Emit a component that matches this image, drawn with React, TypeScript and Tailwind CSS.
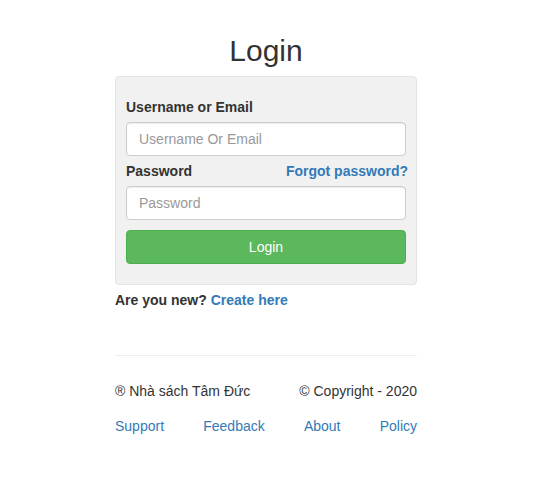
export default function App() {
    return (
        <div className="min-h-[494px] bg-white font-['Liberation_Sans',Arial,sans-serif] text-[14px] text-[#333]">
            <div className="ml-[115px] w-[302px] pt-[31px]">
                {/* Title */}
                <h1 className="text-center text-[30px] leading-[40px] text-[#333]">Login</h1>

                {/* Login panel */}
                <div className="mt-[5px] rounded-[4px] border border-[#e3e3e3] bg-[#f1f1f1] px-[10px] pt-[20px] pb-[20px]">
                    <label className="block font-bold leading-[20px] mb-[5px]">Username or Email</label>
                    <input
                        type="text"
                        placeholder="Username Or Email"
                        className="block h-[34px] w-[280px] rounded-[4px] border border-[#ccc] bg-white px-[12px] text-[14px] text-[#555] placeholder:text-[#999] outline-none shadow-[inset_0_1px_1px_rgba(0,0,0,0.075)]"
                    />

                    <div className="mt-[5px] mb-[5px] flex items-center justify-between leading-[20px]">
                        <label className="font-bold">Password</label>
                        <a href="#" className="-mr-[2px] font-bold text-[#337ab7]">Forgot password?</a>
                    </div>
                    <input
                        type="password"
                        placeholder="Password"
                        className="block h-[34px] w-[280px] rounded-[4px] border border-[#ccc] bg-white px-[12px] text-[14px] text-[#555] placeholder:text-[#999] outline-none shadow-[inset_0_1px_1px_rgba(0,0,0,0.075)]"
                    />

                    <button className="mt-[10px] block h-[34px] w-[280px] rounded-[4px] border border-[#4cae4c] bg-[#5cb85c] text-[14px] text-white">
                        Login
                    </button>
                </div>

                <p className="mt-[5px] font-bold leading-[20px]">
                    Are you new? <a href="#" className="text-[#337ab7]">Create here</a>
                </p>

                {/* Footer */}
                <hr className="mt-[45px] border-t border-[#eee]" />
                <div className="mt-[25px] flex justify-between leading-[20px]">
                    <span>® Nhà sách Tâm Đức</span>
                    <span>© Copyright - 2020</span>
                </div>
                <div className="mt-[15px] flex justify-between leading-[20px] text-[#337ab7]">
                    <a href="#">Support</a>
                    <a href="#">Feedback</a>
                    <a href="#">About</a>
                    <a href="#">Policy</a>
                </div>
            </div>
        </div>
    )
}
